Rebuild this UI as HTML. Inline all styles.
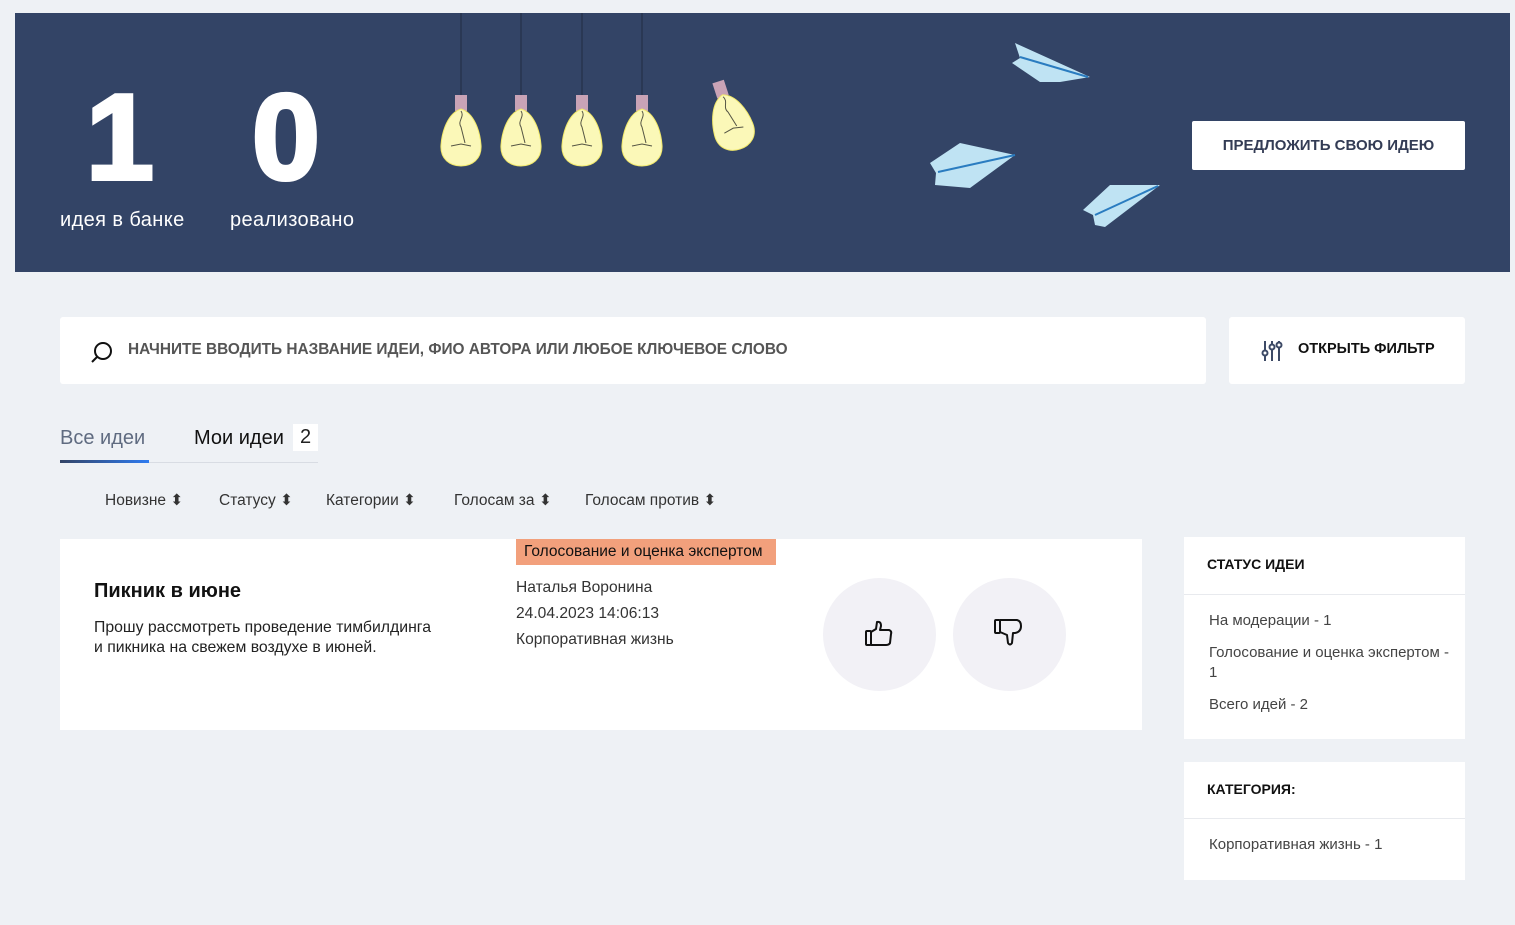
<!DOCTYPE html>
<html><head><meta charset="utf-8"><style>
*{margin:0;padding:0;box-sizing:border-box}
body{width:1515px;height:925px;background:#eef1f5;font-family:"Liberation Sans",sans-serif;position:relative;overflow:hidden;color:#222}
.ab{position:absolute}
.banner{left:15px;top:13px;width:1495px;height:259px;background:#334466}
.big{color:#fff;font-weight:bold;font-size:122px;line-height:1;-webkit-text-stroke:4px #fff}
.lbl{color:#fff;font-size:20px;letter-spacing:.4px}
.btn{left:1192px;top:121px;width:273px;height:49px;background:#fff;border-radius:2px;font-weight:bold;font-size:15px;color:#333c55;text-align:center;line-height:49px}
.search{left:60px;top:317px;width:1146px;height:67px;background:#fff;border-radius:3px}
.filter{left:1229px;top:317px;width:236px;height:67px;background:#fff;border-radius:3px}
.card{left:60px;top:539px;width:1082px;height:191px;background:#fff}
.side{background:#fff;left:1184px;width:281px}
.side .h{font-weight:bold;font-size:14px;padding:20px 23px;border-bottom:1px solid #e8eaee;color:#111}
.side .t{font-size:15px;color:#444;padding:0 0 0 25px}
.circ{width:113px;height:113px;border-radius:50%;background:#f2f1f6;top:578px}
.s{font-size:15.5px;color:#333}
</style></head><body>
<div class="ab banner"></div>
<div class="ab big" style="left:86px;top:76px">1</div>
<div class="ab big" style="left:252px;top:76px">0</div>
<div class="ab lbl" style="left:60px;top:209px">идея в банке</div>
<div class="ab lbl" style="left:230px;top:209px">реализовано</div>
<svg class="ab" style="left:420px;top:13px" width="380" height="180">
<g stroke="#28344f" stroke-width="1.5"><line x1="41" y1="0" x2="41" y2="82"/><line x1="101" y1="0" x2="101" y2="82"/><line x1="162" y1="0" x2="162" y2="82"/><line x1="222" y1="0" x2="222" y2="82"/></g>
<g id="b"><rect x="35" y="82" width="12" height="16" fill="#c9a3b6"/><path d="M41 96 C28 100 22 118 21 132 C20 146 30 153 41 153 C52 153 62 146 61 132 C60 118 54 100 41 96Z" fill="#fbf8b8" stroke="#f2e96a"/><path d="M41 98 c4 6-4 10 0 16 l4 16 m-14 3 l10-2 10 2" stroke="#554" fill="none"/></g>
<use href="#b" x="60"/><use href="#b" x="121"/><use href="#b" x="181"/>
<g transform="rotate(-18 300 110)"><use href="#b" x="270" y="-12"/></g>
</svg>
<svg class="ab" style="left:900px;top:30px" width="280" height="210">
<g fill="#bfe3f3"><path d="M115 13 L190 47 L160 52 L140 52 L112 33 L120 28Z"/><path d="M30 133 L60 113 L115 125 L70 158 L35 155 L36 143Z"/><path d="M183 180 L210 155 L260 155 L205 197 L195 195 L193 185Z"/></g>
<g stroke="#2a7cc0" stroke-width="2"><line x1="120" y1="27" x2="188" y2="47"/><line x1="38" y1="142" x2="115" y2="125"/><line x1="195" y1="185" x2="258" y2="156"/></g>
</svg>
<div class="ab btn">ПРЕДЛОЖИТЬ СВОЮ ИДЕЮ</div>
<div class="ab search"><svg class="ab" style="left:30px;top:24px" width="24" height="24"><circle cx="13" cy="10" r="8" fill="none" stroke="#111" stroke-width="2"/><line x1="7" y1="16" x2="2" y2="21" stroke="#111" stroke-width="2"/></svg><div class="ab" style="left:68px;top:24px;font-size:15.4px;font-weight:bold;color:#555">НАЧНИТЕ ВВОДИТЬ НАЗВАНИЕ ИДЕИ, ФИО АВТОРА ИЛИ ЛЮБОЕ КЛЮЧЕВОЕ СЛОВО</div></div>
<div class="ab filter"><svg class="ab" style="left:32px;top:22px" width="22" height="24" stroke="#3d4a66" stroke-width="2" fill="none"><line x1="4" y1="2" x2="4" y2="22"/><line x1="11" y1="2" x2="11" y2="22"/><line x1="18" y1="2" x2="18" y2="22"/><circle cx="4" cy="14" r="2.5" fill="#fff"/><circle cx="11" cy="8" r="2.5" fill="#fff"/><circle cx="18" cy="6" r="2.5" fill="#fff"/></svg><div class="ab" style="left:69px;top:24px;font-size:14.5px;font-weight:bold;color:#111">ОТКРЫТЬ ФИЛЬТР</div></div>
<div class="ab" style="left:60px;top:427px;font-size:20px;color:#5f6b80">Все идеи</div>
<div class="ab" style="left:194px;top:427px;font-size:20px;color:#111">Мои идеи</div>
<div class="ab" style="left:293px;top:424px;width:25px;height:27px;background:#fff;font-size:20px;text-align:center;line-height:27px">2</div>
<div class="ab" style="left:60px;top:462px;width:258px;height:1px;background:#d8dce3"></div>
<div class="ab" style="left:60px;top:460px;width:89px;height:3px;background:linear-gradient(90deg,#334466,#2f7bf0)"></div>
<div class="ab s" style="left:105px;top:491px">Новизне ⬍</div>
<div class="ab s" style="left:219px;top:491px">Статусу ⬍</div>
<div class="ab s" style="left:326px;top:491px">Категории ⬍</div>
<div class="ab s" style="left:454px;top:491px">Голосам за ⬍</div>
<div class="ab s" style="left:585px;top:491px">Голосам против ⬍</div>
<div class="ab card"></div>
<div class="ab" style="left:516px;top:539px;width:260px;height:26px;background:#f2a07c;font-size:15.5px;color:#111;line-height:26px;padding-left:8px;white-space:nowrap">Голосование и оценка экспертом</div>
<div class="ab" style="left:94px;top:580px;font-size:20px;font-weight:bold;color:#111">Пикник в июне</div>
<div class="ab" style="left:94px;top:618px;font-size:15.8px;line-height:20px;color:#222">Прошу рассмотреть проведение тимбилдинга<br>и пикника на свежем воздухе в июней.</div>
<div class="ab" style="left:516px;top:575px;font-size:15.6px;line-height:26px;color:#333">Наталья Воронина<br>24.04.2023 14:06:13<br>Корпоративная жизнь</div>
<div class="ab circ" style="left:823px"></div>
<div class="ab circ" style="left:953px"></div>
<svg class="ab" style="left:864px;top:619px" width="30" height="30" fill="none" stroke="#111" stroke-width="2" stroke-linejoin="round"><rect x="2" y="12" width="5" height="14" rx="1"/><path d="M7 13 L12 10 L13 3 Q17 2 17 7 L16 11 L25 11 Q28 12 27 15 L26 24 Q25 26 22 26 L7 26"/></svg>
<svg class="ab" style="left:993px;top:617px" width="30" height="32" fill="none" stroke="#111" stroke-width="2" stroke-linejoin="round"><rect x="2" y="3" width="5" height="13" rx="1"/><path d="M7 3 L24 3 Q28 4 28 9 Q28 15 22 16 L20 16 L19 26 Q17 29 15 26 L14 18 L7 15"/></svg>
<div class="ab side" style="top:537px;height:202px"><div class="h" style="padding:19px 23px 22px">СТАТУС ИДЕИ</div><div class="t" style="padding-top:16px;line-height:20px">На модерации - 1</div><div class="t" style="padding-top:12px;line-height:20px">Голосование и оценка экспертом -<br>1</div><div class="t" style="padding-top:12px;line-height:20px">Всего идей - 2</div></div>
<div class="ab side" style="top:762px;height:118px"><div class="h" style="padding:19px 23px 21px">КАТЕГОРИЯ:</div><div class="t" style="padding-top:17px">Корпоративная жизнь - 1</div></div>
</body></html>
